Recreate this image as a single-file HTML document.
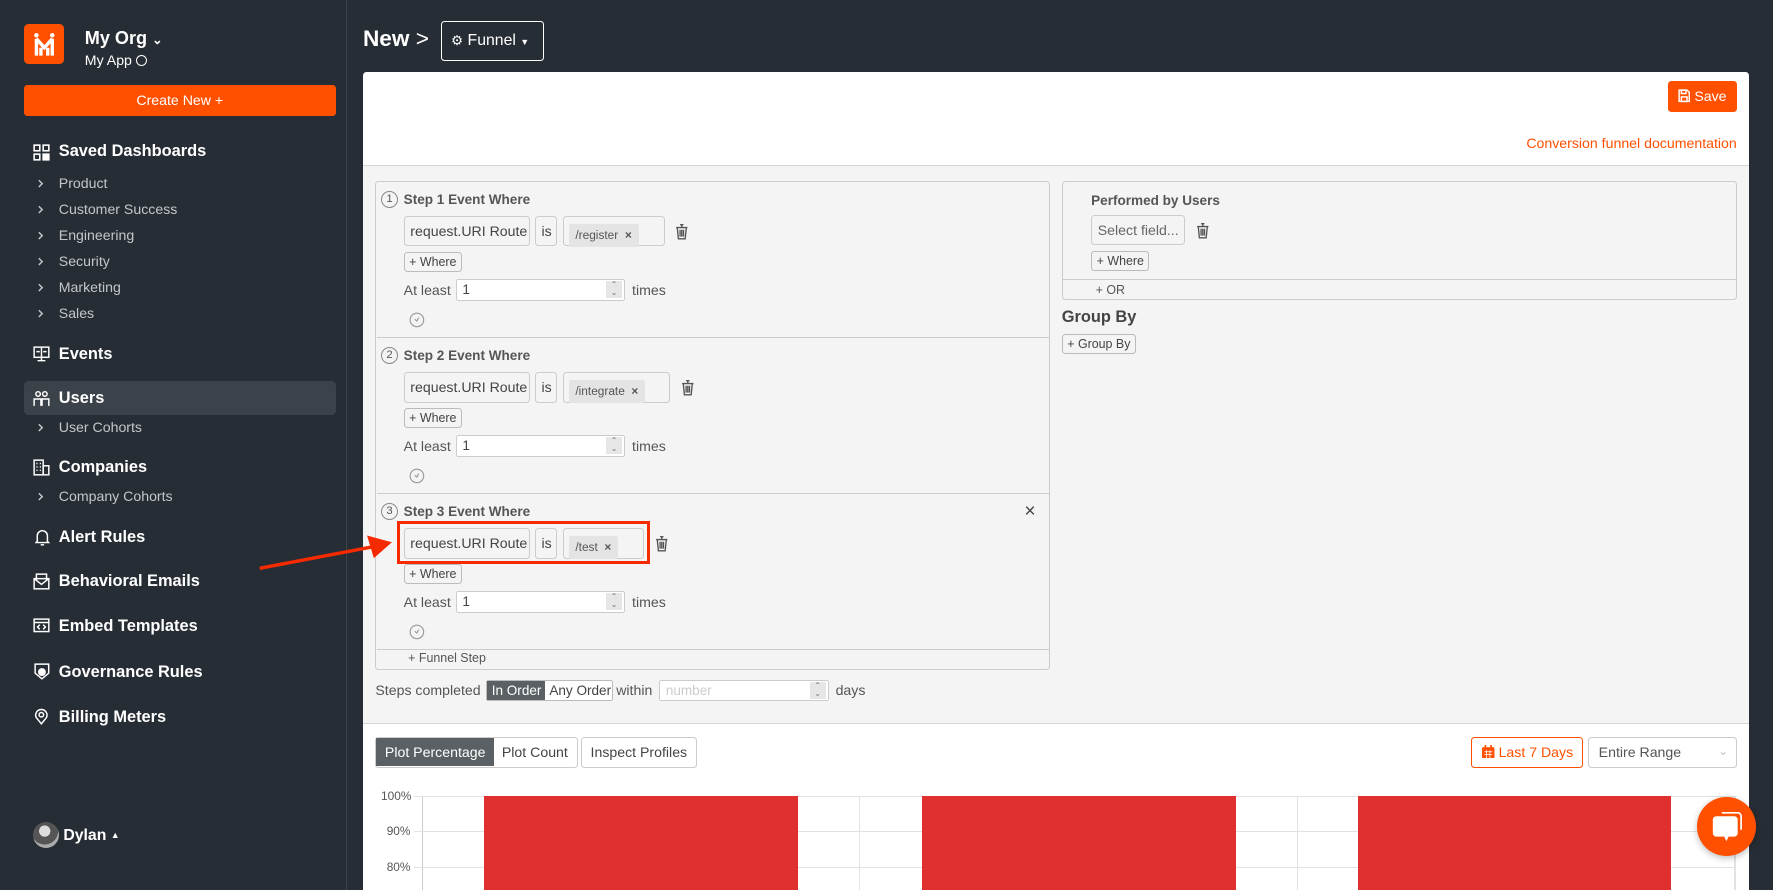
<!DOCTYPE html>
<html><head><meta charset="utf-8">
<style>
html{zoom:1.1307}
*{box-sizing:border-box;margin:0;padding:0}
body{width:1568px;height:787px;overflow:hidden;background:#272d34;font-family:"Liberation Sans",Arial,sans-serif;position:relative;color:#333}
.a{position:absolute;white-space:nowrap}
.nav{font-weight:bold;font-size:14.5px;color:#fff}
.sub{font-size:12.5px;color:#c4c7ca}
.box{border:1px solid #ccc;border-radius:3px;background:#f4f4f4}
.inp{border:1px solid #ccc;border-radius:3px;background:#f4f4f4;font-size:12.5px;color:#444;padding:0 5px;line-height:25px}
.btn{border:1px solid #bbb;border-radius:3px;background:#f4f4f4;font-size:11px;color:#444;line-height:16px;padding:0 4px}
.num{border:1px solid #ccc;border-radius:2px;background:#fff;font-size:12px;color:#444;line-height:17px;padding-left:5px}
.spin{position:absolute;right:2px;top:1px;width:14px;height:15px;background:#e6e6e6;font-size:7px;line-height:7px;text-align:center;color:#777}
.t{font-size:12.5px;color:#555}
.h{font-weight:bold;font-size:12px;color:#555}
.circ{width:15px;height:15px;border:1px solid #888;border-radius:50%;font-size:10px;line-height:13px;text-align:center;color:#555}
.chip{background:#e4e4e4;border-radius:2px;font-size:10.5px;color:#555;line-height:20px;padding:0 6px}
</style></head><body>
<svg width="0" height="0" style="position:absolute"><defs>
<symbol id="tr" viewBox="0 0 12 15"><g fill="none" stroke="#555" stroke-width="1.2"><path d="M1 4h10M4.5 1.5h3M6 1.5v2.5M2 4l1 10h6l1-10M4.5 6v6M6 6v6M7.5 6v6"/></g></symbol>
<symbol id="ch" viewBox="0 0 8 10"><path d="M2.5 2l3 3-3 3" fill="none" stroke="#c4c7ca" stroke-width="1.3"/></symbol>
<symbol id="ck" viewBox="0 0 14 14"><circle cx="7" cy="7" r="6" fill="none" stroke="#999" stroke-width="1"/><path d="M5 6.5l2 1.5 1.5-3" fill="none" stroke="#999" stroke-width="1"/></symbol>
</defs></svg>

<!-- sidebar -->
<div class="a" style="left:306px;top:0;width:1px;height:787px;background:#3c434b"></div>
<div class="a" style="left:21px;top:21px;width:36px;height:36px;background:#ff5000;border-radius:4px">
<svg width="36" height="36" viewBox="0 0 36 36"><g stroke="#fff" stroke-width="3" fill="none"><path d="M11 28V13M25 28V13M11 13l7 8 7-8M15 21v7M21 21v7"/></g><circle cx="11" cy="10" r="2" fill="#fff"/><circle cx="25" cy="10" r="2" fill="#fff"/></svg></div>
<div class="a" style="left:75px;top:25px;font-size:16px;font-weight:bold;color:#fff">My Org <span style="font-size:11px">&#8964;</span></div>
<div class="a" style="left:75px;top:46px;font-size:12.5px;color:#fff">My App <span style="display:inline-block;width:10px;height:10px;border:1.3px solid #fff;border-radius:50%;vertical-align:-1px"></span></div>
<div class="a" style="left:21px;top:75px;width:276px;height:28px;background:#ff5000;border-radius:3px;color:#fff;font-size:12.5px;text-align:center;line-height:28px">Create New +</div>

<svg class="a" style="left:29px;top:127px" width="15" height="15" viewBox="0 0 15 15" fill="none" stroke="#fff" stroke-width="1.4"><rect x="1" y="1" width="5" height="5"/><rect x="9" y="1" width="5" height="5"/><rect x="1" y="9" width="5" height="5"/><rect x="9" y="9" width="5" height="5" fill="#fff"/></svg>
<div class="a nav" style="left:52px;top:126px">Saved Dashboards</div>
<svg class="a" style="left:32px;top:157px" width="8" height="10"><use href="#ch"/></svg><div class="a sub" style="left:52px;top:155px">Product</div>
<svg class="a" style="left:32px;top:180px" width="8" height="10"><use href="#ch"/></svg><div class="a sub" style="left:52px;top:178px">Customer Success</div>
<svg class="a" style="left:32px;top:203px" width="8" height="10"><use href="#ch"/></svg><div class="a sub" style="left:52px;top:201px">Engineering</div>
<svg class="a" style="left:32px;top:226px" width="8" height="10"><use href="#ch"/></svg><div class="a sub" style="left:52px;top:224px">Security</div>
<svg class="a" style="left:32px;top:249px" width="8" height="10"><use href="#ch"/></svg><div class="a sub" style="left:52px;top:247px">Marketing</div>
<svg class="a" style="left:32px;top:272px" width="8" height="10"><use href="#ch"/></svg><div class="a sub" style="left:52px;top:270px">Sales</div>

<svg class="a" style="left:29px;top:306px" width="15" height="14" viewBox="0 0 15 14" fill="none" stroke="#fff" stroke-width="1.3"><rect x="1" y="1" width="13" height="9"/><path d="M7.5 1v12M4 13h7M3 5h3M9 5h3"/></svg>
<div class="a nav" style="left:52px;top:305px">Events</div>
<div class="a" style="left:21px;top:337px;width:276px;height:30px;background:#3b4249;border-radius:4px"></div>
<svg class="a" style="left:29px;top:345px" width="15" height="15" viewBox="0 0 15 15" fill="none" stroke="#fff" stroke-width="1.3"><circle cx="4.5" cy="3.5" r="2"/><circle cx="10.5" cy="3.5" r="2"/><path d="M1 14V8h7v6M7 14V8h7v6"/></svg>
<div class="a nav" style="left:52px;top:344px">Users</div>
<svg class="a" style="left:32px;top:373px" width="8" height="10"><use href="#ch"/></svg><div class="a sub" style="left:52px;top:371px">User Cohorts</div>
<svg class="a" style="left:29px;top:406px" width="15" height="15" viewBox="0 0 15 15" fill="none" stroke="#fff" stroke-width="1.3"><rect x="1" y="1" width="8" height="13"/><rect x="9" y="6" width="5" height="8"/><path d="M3 4h1M6 4h1M3 7h1M6 7h1M3 10h1M6 10h1"/></svg>
<div class="a nav" style="left:52px;top:405px">Companies</div>
<svg class="a" style="left:32px;top:434px" width="8" height="10"><use href="#ch"/></svg><div class="a sub" style="left:52px;top:432px">Company Cohorts</div>
<svg class="a" style="left:31px;top:468px" width="13" height="15" viewBox="0 0 13 15" fill="none" stroke="#fff" stroke-width="1.3"><path d="M2 11V6a4.5 4.5 0 0 1 9 0v5l1 1H1z"/><path d="M5 14h3"/></svg>
<div class="a nav" style="left:52px;top:467px">Alert Rules</div>
<svg class="a" style="left:29px;top:507px" width="15" height="15" viewBox="0 0 15 15" fill="none" stroke="#fff" stroke-width="1.3"><rect x="1" y="5" width="13" height="9"/><path d="M1 5l6.5 5 6.5-5M3 7V1h9v6"/></svg>
<div class="a nav" style="left:52px;top:506px">Behavioral Emails</div>
<svg class="a" style="left:29px;top:547px" width="15" height="13" viewBox="0 0 15 13" fill="none" stroke="#fff" stroke-width="1.3"><rect x="1" y="1" width="13" height="11"/><path d="M1 4h13M6 6l-2 2 2 2M9 6l2 2-2 2"/></svg>
<div class="a nav" style="left:52px;top:546px">Embed Templates</div>
<svg class="a" style="left:30px;top:586px" width="14" height="15" viewBox="0 0 14 15"><path d="M1 1h12v8l-6 5-6-5z" fill="none" stroke="#fff" stroke-width="1.3"/><circle cx="7" cy="8" r="3.5" fill="#fff"/></svg>
<div class="a nav" style="left:52px;top:586px">Governance Rules</div>
<svg class="a" style="left:30px;top:626px" width="13" height="15" viewBox="0 0 13 15" fill="none" stroke="#fff" stroke-width="1.3"><path d="M6.5 14L2 8.5a5 5 0 1 1 9 0z"/><circle cx="6.5" cy="6" r="2"/></svg>
<div class="a nav" style="left:52px;top:626px">Billing Meters</div>
<div class="a" style="left:29px;top:727px;width:23px;height:23px;border-radius:50%;background:radial-gradient(circle at 45% 35%,#ddd 0 25%,#555 26% 60%,#aaa 61%)"></div>
<div class="a" style="left:56px;top:731px;font-size:14px;font-weight:bold;color:#fff">Dylan <span style="font-size:8px;vertical-align:2px">&#9650;</span></div>

<!-- header -->
<div class="a" style="left:321px;top:23px;font-size:20px;font-weight:bold;color:#fff">New <span style="font-weight:normal">&gt;</span></div>
<div class="a" style="left:390px;top:19px;width:91px;height:35px;border:1px solid #fff;border-radius:3px;color:#fff;font-size:14px;line-height:33px;padding-left:8px"><span style="font-size:12px">&#9881;</span> Funnel <span style="font-size:8px">&#9660;</span></div>

<!-- main panel -->
<div class="a" style="left:321px;top:64px;width:1226px;height:723px;background:#fff;border-radius:3px 3px 0 0"></div>
<div class="a" style="left:321px;top:146px;width:1226px;height:494px;background:#f4f4f4;border-top:1px solid #d6d6d6;border-bottom:1px solid #d6d6d6"></div>
<div class="a" style="left:1475px;top:72px;width:61px;height:27px;background:#ff5000;border-radius:3px;color:#fff;font-size:12.5px;line-height:27px;padding-left:9px">
<svg width="11" height="12" viewBox="0 0 11 12" style="vertical-align:-1px" fill="none" stroke="#fff" stroke-width="1.3"><path d="M1 1h7l2 2v8H1z"/><rect x="3" y="1" width="4" height="3"/><rect x="3" y="7" width="5" height="4"/></svg> Save</div>
<div class="a" style="right:32px;top:119px;font-size:12.5px;color:#ff5000">Conversion funnel documentation</div>

<!-- steps box -->
<div class="a box" style="left:332px;top:160px;width:597px;height:433px"></div>
<div class="a" style="left:333px;top:298px;width:595px;height:1px;background:#ccc"></div>
<div class="a" style="left:333px;top:436px;width:595px;height:1px;background:#ccc"></div>
<div class="a" style="left:333px;top:574px;width:595px;height:1px;background:#ccc"></div>
<div class="a t" style="left:361px;top:576px;font-size:11px">+ Funnel Step</div>

<!-- step 1 -->
<div class="a circ" style="left:337px;top:169px">1</div>
<div class="a h" style="left:357px;top:170px">Step 1 Event Where</div>
<div class="a inp" style="left:357px;top:191px;width:112px;height:27px">request.URI Route</div>
<div class="a inp" style="left:473px;top:191px;width:20px;height:27px">is</div>
<div class="a inp" style="left:498px;top:191px;width:90px;height:27px;padding:3px 4px"><span class="chip" style="display:inline-block">/register &nbsp;<b>×</b></span></div>
<svg class="a" style="left:597px;top:197px" width="12" height="15"><use href="#tr"/></svg>
<div class="a btn" style="left:357px;top:223px">+ Where</div>
<div class="a t" style="left:357px;top:249px">At least</div>
<div class="a num" style="left:403px;top:247px;width:150px;height:19px">1<div class="spin">&#8963;<br>&#8964;</div></div>
<div class="a t" style="left:559px;top:249px">times</div>
<svg class="a" style="left:362px;top:276px" width="14" height="14"><use href="#ck"/></svg>

<!-- step 2 -->
<div class="a circ" style="left:337px;top:307px">2</div>
<div class="a h" style="left:357px;top:308px">Step 2 Event Where</div>
<div class="a inp" style="left:357px;top:329px;width:112px;height:27px">request.URI Route</div>
<div class="a inp" style="left:473px;top:329px;width:20px;height:27px">is</div>
<div class="a inp" style="left:498px;top:329px;width:95px;height:27px;padding:3px 4px"><span class="chip" style="display:inline-block">/integrate &nbsp;<b>×</b></span></div>
<svg class="a" style="left:602px;top:335px" width="12" height="15"><use href="#tr"/></svg>
<div class="a btn" style="left:357px;top:361px">+ Where</div>
<div class="a t" style="left:357px;top:387px">At least</div>
<div class="a num" style="left:403px;top:385px;width:150px;height:19px">1<div class="spin">&#8963;<br>&#8964;</div></div>
<div class="a t" style="left:559px;top:387px">times</div>
<svg class="a" style="left:362px;top:414px" width="14" height="14"><use href="#ck"/></svg>

<!-- step 3 -->
<div class="a circ" style="left:337px;top:445px">3</div>
<div class="a h" style="left:357px;top:446px">Step 3 Event Where</div>
<div class="a" style="left:906px;top:443px;font-size:17px;color:#444">×</div>
<div class="a inp" style="left:357px;top:467px;width:112px;height:27px">request.URI Route</div>
<div class="a inp" style="left:473px;top:467px;width:20px;height:27px">is</div>
<div class="a inp" style="left:498px;top:467px;width:72px;height:27px;padding:3px 4px"><span class="chip" style="display:inline-block">/test &nbsp;<b>×</b></span></div>
<div class="a" style="left:351px;top:461px;width:224px;height:38px;border:3px solid #f52a00"></div>
<svg class="a" style="left:579px;top:473px" width="12" height="15"><use href="#tr"/></svg>
<div class="a btn" style="left:357px;top:499px">+ Where</div>
<div class="a t" style="left:357px;top:525px">At least</div>
<div class="a num" style="left:403px;top:523px;width:150px;height:19px">1<div class="spin">&#8963;<br>&#8964;</div></div>
<div class="a t" style="left:559px;top:525px">times</div>
<svg class="a" style="left:362px;top:552px" width="14" height="14"><use href="#ck"/></svg>

<!-- arrow -->
<svg class="a" style="left:225px;top:470px" width="130" height="40" viewBox="0 0 130 40"><path d="M5 33L105 14" stroke="#f52a00" stroke-width="3"/><path d="M122 10L100 4l6 20z" fill="#f52a00"/></svg>

<!-- steps completed -->
<div class="a t" style="left:332px;top:603px">Steps completed</div>
<div class="a" style="left:430px;top:601px;width:112px;height:19px;border:1px solid #bbb;border-radius:2px;background:#fff;font-size:12px;line-height:17px;color:#444">
<span style="display:inline-block;background:#5a6064;color:#fff;padding:0 4px;width:51px">In Order</span><span style="padding-left:4px">Any Order</span></div>
<div class="a t" style="left:545px;top:603px">within</div>
<div class="a num" style="left:583px;top:601px;width:150px;height:19px;color:#ccc">number<div class="spin">&#8963;<br>&#8964;</div></div>
<div class="a t" style="left:739px;top:603px">days</div>

<!-- right box -->
<div class="a box" style="left:939px;top:160px;width:597px;height:105px"></div>
<div class="a" style="left:940px;top:247px;width:595px;height:1px;background:#ccc"></div>
<div class="a h" style="left:965px;top:171px">Performed by Users</div>
<div class="a inp" style="left:965px;top:190px;width:83px;height:27px;color:#666">Select field...</div>
<svg class="a" style="left:1058px;top:196px" width="12" height="15"><use href="#tr"/></svg>
<div class="a btn" style="left:965px;top:222px">+ Where</div>
<div class="a t" style="left:969px;top:250px;font-size:11px">+ OR</div>
<div class="a" style="left:939px;top:272px;font-size:14.5px;font-weight:bold;color:#444">Group By</div>
<div class="a btn" style="left:939px;top:295px">+ Group By</div>

<!-- chart controls -->
<div class="a" style="left:332px;top:652px;width:179px;height:27px;border:1px solid #ccc;border-radius:3px;font-size:12.5px;line-height:25px;color:#444">
<span style="display:inline-block;background:#5a6064;color:#fff;width:104px;text-align:center">Plot Percentage</span><span style="padding-left:7px">Plot Count</span></div>
<div class="a" style="left:514px;top:652px;width:102px;height:27px;border:1px solid #ccc;border-radius:3px;font-size:12.5px;line-height:25px;color:#444;text-align:center">Inspect Profiles</div>
<div class="a" style="left:1301px;top:652px;width:99px;height:27px;border:1px solid #ff5000;border-radius:3px;font-size:12.5px;line-height:25px;color:#ff5000;padding-left:9px">
<svg width="11" height="12" viewBox="0 0 11 12" style="vertical-align:-1px"><rect x="0" y="2" width="11" height="10" rx="1" fill="#ff5000"/><path d="M3 0v3M8 0v3" stroke="#ff5000" stroke-width="1.5"/><path d="M2 6h7M2 8.5h7M4 4.5v7M7 4.5v7" stroke="#fff" stroke-width=".7"/></svg> Last 7 Days</div>
<div class="a" style="left:1404px;top:652px;width:132px;height:27px;border:1px solid #ccc;border-radius:3px;font-size:12.5px;line-height:25px;color:#555;padding-left:9px">Entire Range<span style="position:absolute;right:7px;color:#bbb;font-size:10px">&#8964;</span></div>

<!-- chart -->
<div class="a" style="left:337px;top:698px;font-size:10.5px;color:#555">100%</div>
<div class="a" style="left:342px;top:729px;font-size:10.5px;color:#555">90%</div>
<div class="a" style="left:342px;top:761px;font-size:10.5px;color:#555">80%</div>
<div class="a" style="left:373px;top:704px;width:1px;height:83px;background:#ccc"></div>
<div class="a" style="left:366px;top:704px;width:1169px;height:1px;background:#e2e2e2"></div>
<div class="a" style="left:366px;top:735px;width:1169px;height:1px;background:#e2e2e2"></div>
<div class="a" style="left:366px;top:767px;width:1169px;height:1px;background:#e2e2e2"></div>
<div class="a" style="left:760px;top:704px;width:1px;height:83px;background:#e2e2e2"></div>
<div class="a" style="left:1147px;top:704px;width:1px;height:83px;background:#e2e2e2"></div>
<div class="a" style="left:1534px;top:704px;width:1px;height:83px;background:#e2e2e2"></div>
<div class="a" style="left:428px;top:704px;width:278px;height:83px;background:#e02f2f"></div>
<div class="a" style="left:815px;top:704px;width:278px;height:83px;background:#e02f2f"></div>
<div class="a" style="left:1201px;top:704px;width:277px;height:83px;background:#e02f2f"></div>

<!-- chat bubble -->
<div class="a" style="left:1501px;top:705px;width:52px;height:52px;border-radius:50%;background:#ff5000;box-shadow:0 2px 6px rgba(0,0,0,.25)">
<svg width="52" height="52" viewBox="0 0 52 52"><path d="M17 17h16a3 3 0 0 1 3 3v12a3 3 0 0 1-3 3h-5l-2 4-2-4h-7a3 3 0 0 1-3-3V20a3 3 0 0 1 3-3z" fill="#fff"/><path d="M22 14h14a3 3 0 0 1 3 3v12" fill="none" stroke="#fff" stroke-width="1.5"/></svg></div>
</body></html>
